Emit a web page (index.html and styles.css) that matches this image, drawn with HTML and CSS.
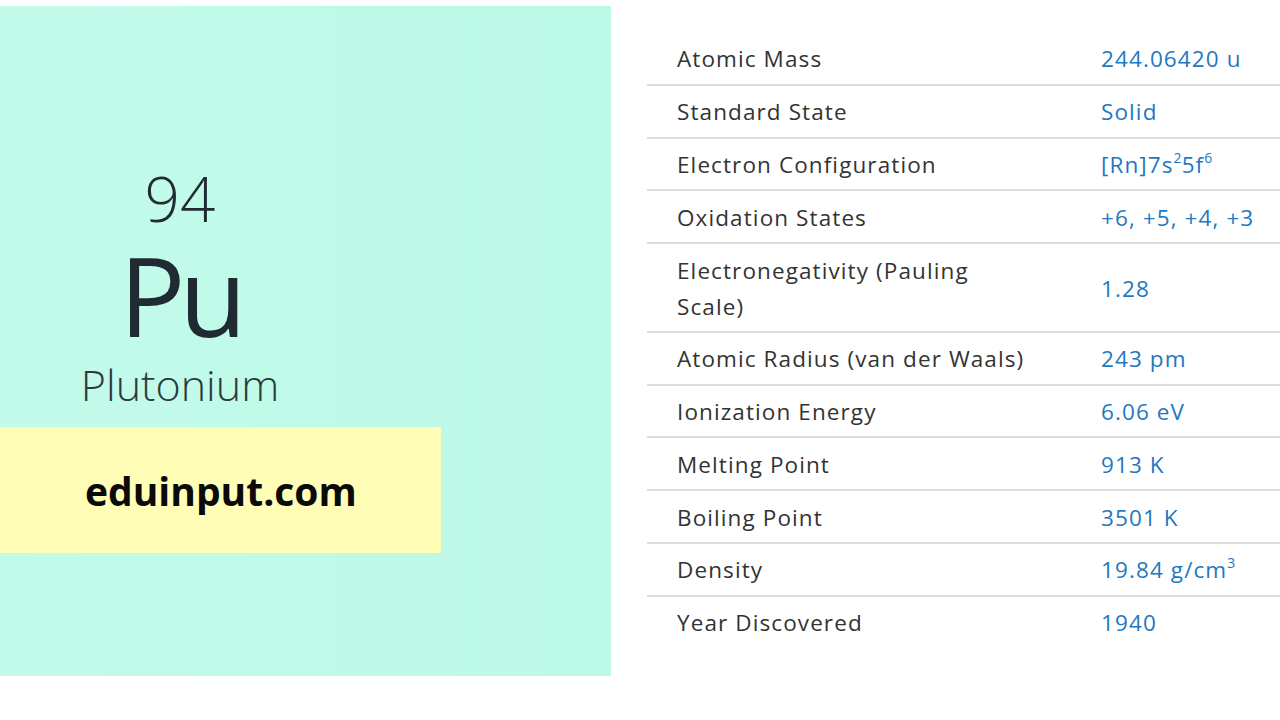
FILE: index.html
```html
<!DOCTYPE html>
<html>
<head>
<meta charset="utf-8">
<link rel="stylesheet" href="styles.css">
</head>
<body>
<div class="page">
  <section class="element">
    <div class="symbol-block">
      <div class="number">94</div>
      <div class="symbol">Pu</div>
      <div class="name">Plutonium</div>
    </div>
    <div class="brand">eduinput.com</div>
  </section>
  <section class="props">
    <div class="row"><div class="label">Atomic Mass</div><div class="value">244.06420 u</div></div>
    <div class="row"><div class="label">Standard State</div><div class="value">Solid</div></div>
    <div class="row"><div class="label">Electron Configuration</div><div class="value">[Rn]7s<sup>2</sup>5f<sup>6</sup></div></div>
    <div class="row"><div class="label">Oxidation States</div><div class="value">+6, +5, +4, +3</div></div>
    <div class="row"><div class="label">Electronegativity (Pauling Scale)</div><div class="value">1.28</div></div>
    <div class="row"><div class="label">Atomic Radius (van der Waals)</div><div class="value">243 pm</div></div>
    <div class="row"><div class="label">Ionization Energy</div><div class="value">6.06 eV</div></div>
    <div class="row"><div class="label">Melting Point</div><div class="value">913 K</div></div>
    <div class="row"><div class="label">Boiling Point</div><div class="value">3501 K</div></div>
    <div class="row"><div class="label">Density</div><div class="value">19.84 g/cm<sup>3</sup></div></div>
    <div class="row last"><div class="label">Year Discovered</div><div class="value">1940</div></div>
  </section>
</div>
</body>
</html>
```
FILE: styles.css
```css
* { box-sizing: border-box; }
html, body { margin: 0; padding: 0; background: #ffffff; }
body { width: 1280px; height: 720px; overflow: hidden; font-family: "Open Sans", "Noto Sans", sans-serif; }
.page { display: flex; align-items: flex-start; }
.element {
  width: 611px;
  height: 670px;
  margin-top: 6px;
  background: linear-gradient(90deg, #c3fbeb 0%, #bcf9e6 100%);
  display: flex;
  flex-direction: column;
}
.symbol-block {
  width: 360px;
  text-align: center;
  color: #1f2a33;
  padding-top: 152px;
}
.number { font-size: 62px; font-weight: 300; line-height: 80px; }
.symbol { font-size: 110px; font-weight: 400; line-height: 104px; margin-top: 4px; letter-spacing: -6px; }
.name { font-size: 43px; font-weight: 300; line-height: 56px; color: #2d3a3c; margin-top: 11px; }
.brand {
  margin-top: 14px;
  width: 441px;
  height: 126px;
  background: #fffdb6;
  display: flex;
  align-items: center;
  padding-left: 85px;
  font-size: 39px;
  font-weight: 700;
  color: #0a0a0a;
}
.props {
  margin-left: 36px;
  padding-top: 33px;
  flex: 1;
}
.row {
  display: grid;
  grid-template-columns: 424px 1fr;
  padding: 8.4px 0 6.4px 30px;
  border-bottom: 2px solid #dedede;
  font-size: 22.5px;
  line-height: 36px;
  letter-spacing: 1.1px;
}
.row.last { border-bottom: none; }
.label { color: #333333; max-width: 360px; }
.value { color: #1f78c1; white-space: nowrap; align-self: center; }
.value sup { font-size: 14px; line-height: 0; vertical-align: 10px; letter-spacing: 0; }
```
